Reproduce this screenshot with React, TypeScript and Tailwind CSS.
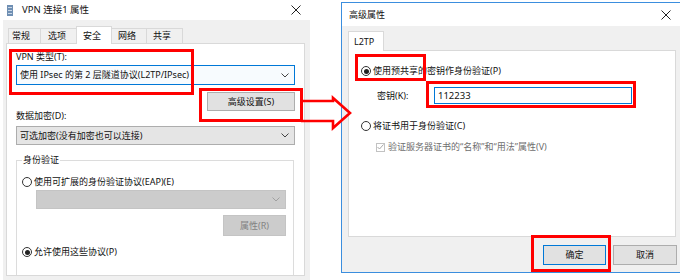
import React from "react";

const FONT = { fontFamily: '"Noto Sans", "Noto Sans CJK SC", sans-serif' };

function Chevron({ color = "#444" }: { color?: string }) {
  return (
    <svg width="8" height="5" viewBox="0 0 8 5" className="shrink-0">
      <polyline points="0.5,0.5 4,4 7.5,0.5" fill="none" stroke={color} strokeWidth="1" />
    </svg>
  );
}

function CloseX() {
  return (
    <svg width="10" height="10" viewBox="0 0 10 10">
      <line x1="0.5" y1="0.5" x2="9.5" y2="9.5" stroke="#222" strokeWidth="1" />
      <line x1="9.5" y1="0.5" x2="0.5" y2="9.5" stroke="#222" strokeWidth="1" />
    </svg>
  );
}

function Radio({ checked }: { checked?: boolean }) {
  return (
    <span className="w-[10px] h-[10px] rounded-full border border-[#333] bg-white flex items-center justify-center shrink-0">
      {checked && <span className="w-[5px] h-[5px] rounded-full bg-[#222]" />}
    </span>
  );
}

function LeftDialog() {
  return (
    <div className="w-[310px] h-[280px] flex flex-col shrink-0 bg-white text-[9px] text-[#111] leading-[12px]">
      {/* title bar */}
      <div className="h-[20px] flex items-center pl-[7px] pr-[5px]">
        <svg width="7" height="11" viewBox="0 0 7 11" className="shrink-0">
          <rect x="0" y="0" width="6" height="11" fill="#6f8fb3" />
          <rect x="1" y="2" width="4" height="1" fill="#c9d6e6" />
          <rect x="1" y="5" width="4" height="1" fill="#c9d6e6" />
          <rect x="1" y="8" width="4" height="1" fill="#c9d6e6" />
        </svg>
        <span className="ml-[8px] text-[9.5px]">VPN 连接1 属性</span>
        <span className="ml-auto mr-[4px] flex"><CloseX /></span>
      </div>
      {/* body */}
      <div className="flex-1 ml-[3px] bg-[#f0f0f0] pt-[6px] flex flex-col">
        <div className="flex items-end h-[18px] pl-[5px] -mb-px relative z-10">
          <div className="w-[32px] h-[16px] pl-[3px] flex items-center border border-[#d9d9d9] border-r-0">常规</div>
          <div className="w-[36px] h-[16px] pl-[7px] flex items-center border border-[#d9d9d9] border-r-0">选项</div>
          <div className="w-[36px] h-[18px] pl-[6px] flex items-center border border-[#d9d9d9] border-b-0 bg-white">安全</div>
          <div className="w-[35px] h-[16px] pl-[6px] flex items-center border border-[#d9d9d9] border-l-0">网络</div>
          <div className="w-[36px] h-[16px] pl-[6px] flex items-center border border-[#d9d9d9] border-l-0">共享</div>
        </div>
        <div className="ml-[3px] mr-[5px] h-[233px] bg-white border border-[#d9d9d9] px-[9px] flex flex-col">
          <div className="mt-[7px] h-[12px]">VPN 类型(T):</div>
          <div className="mt-[2px] h-[20px] border border-[#0078d7] bg-[#f7fbfe] flex items-center pl-[3px] pr-[5px]">
            <span className="flex-1">使用 IPsec 的第 2 层隧道协议(L2TP/IPsec)</span>
            <Chevron />
          </div>
          <div className="mt-[7px] self-end w-[88px] h-[19px] bg-[#e1e1e1] border border-[#adadad] flex items-center justify-center">
            高级设置(S)
          </div>
          <div className="h-[12px] -mt-px">数据加密(D):</div>
          <div className="mt-[4px] h-[19px] border border-[#adadad] bg-[#e5e5e5] flex items-center pl-[3px] pr-[5px]">
            <span className="flex-1">可选加密(没有加密也可以连接)</span>
            <Chevron />
          </div>
          <div className="mt-[15px] mr-px flex-1 border border-b-0 border-[#dcdcdc] relative flex flex-col">
            <span className="absolute left-[5px] -top-[7px] bg-white px-px">身份验证</span>
            <div className="mt-[15px] ml-[5px] h-[12px] flex items-center gap-[2px]">
              <Radio />
              <span>使用可扩展的身份验证协议(EAP)(E)</span>
            </div>
            <div className="mt-[2px] ml-[19px] mr-[7px] h-[19px] bg-[#cccccc] border border-[#c4c4c4] flex items-center justify-end pr-[5px]">
              <Chevron color="#a0a0a0" />
            </div>
            <div className="mt-[6px] mr-[7px] self-end w-[63px] h-[21px] bg-[#cccccc] border border-[#c4c4c4] text-[#838383] flex items-center justify-center">
              属性(R)
            </div>
            <div className="mt-[10px] ml-[5px] h-[12px] flex items-center gap-[2px]">
              <Radio checked />
              <span>允许使用这些协议(P)</span>
            </div>
          </div>
        </div>
      </div>
    </div>
  );
}

function RightDialog() {
  return (
    <div className="ml-[31px] mt-[2px] w-[341px] h-[271px] shrink-0 border border-[#3b8ede] flex flex-col text-[9px] text-[#111] leading-[12px]">
      <div className="h-[23px] bg-white flex items-center pl-[7px] pr-[6px]">
        <span>高级属性</span>
        <span className="ml-auto mr-[4px] flex"><CloseX /></span>
      </div>
      <div className="flex-1 bg-[#f0f0f0] pt-[5px] flex flex-col">
        <div className="flex -mb-px relative z-10 pl-[6px]">
          <div className="w-[36px] h-[20px] pl-[5px] flex items-center bg-white border border-[#d9d9d9] border-b-0">L2TP</div>
        </div>
        <div className="ml-[6px] mr-[5px] h-[187px] bg-white border border-[#d9d9d9] flex flex-col pl-[12px]">
          <div className="mt-[14px] h-[12px] flex items-center gap-[2px]">
            <Radio checked />
            <span>使用预共享的密钥作身份验证(P)</span>
          </div>
          <div className="mt-[10px] h-[17px] flex items-center pl-[16px]">
            <span className="w-[57px]">密钥(K):</span>
            <div className="w-[198px] h-[17px] border border-[#0078d7] bg-white flex items-center pl-[3px] text-[9.5px]">112233</div>
          </div>
          <div className="mt-[16px] h-[12px] flex items-center gap-[2px]">
            <Radio />
            <span>将证书用于身份验证(C)</span>
          </div>
          <div className="mt-[9px] h-[12px] flex items-center pl-[15px] gap-[3px] text-[#6e6e6e]">
            <span className="w-[9px] h-[9px] border border-[#c2c2c2] bg-white flex items-center justify-center shrink-0">
              <svg width="7" height="6" viewBox="0 0 7 6">
                <polyline points="0.5,3 2.5,5 6.5,0.5" fill="none" stroke="#a8a8a8" strokeWidth="1" />
              </svg>
            </span>
            <span>验证服务器证书的“名称”和“用法”属性(V)</span>
          </div>
        </div>
        <div className="mt-[8px] flex justify-end gap-[7px] pr-[4px]">
          <div className="w-[63px] h-[20px] bg-[#e1e1e1] border border-[#0078d7] flex items-center justify-center">确定</div>
          <div className="w-[64px] h-[20px] bg-[#e1e1e1] border border-[#adadad] flex items-center justify-center">取消</div>
        </div>
      </div>
    </div>
  );
}

export default function App() {
  return (
    <div className="relative w-[680px] h-[280px] bg-white overflow-hidden flex items-start" style={FONT}>
      <LeftDialog />
      <RightDialog />
      {/* annotations */}
      <div className="absolute left-[9px] top-[49px] w-[185px] h-[46px] border-[3px] border-[#ff0000]" />
      <div className="absolute left-[199px] top-[88px] w-[104px] h-[34px] border-[3px] border-[#ff0000]" />
      <div className="absolute left-[355px] top-[54px] w-[71px] h-[27px] border-[3px] border-[#ff0000]" />
      <div className="absolute left-[426px] top-[81px] w-[210px] h-[27px] border-[3px] border-[#ff0000]" />
      <div className="absolute left-[531px] top-[235px] w-[80px] h-[37px] border-[3px] border-[#ff0000]" />
      <svg className="absolute left-[300px] top-[94px]" width="54" height="38" viewBox="300 94 54 38">
        <polyline
          points="301,101 333,101 333,98 350,113 333,128 333,121 301,121"
          fill="none"
          stroke="#ff0000"
          strokeWidth="2.6"
          strokeLinejoin="miter"
        />
      </svg>
    </div>
  );
}
